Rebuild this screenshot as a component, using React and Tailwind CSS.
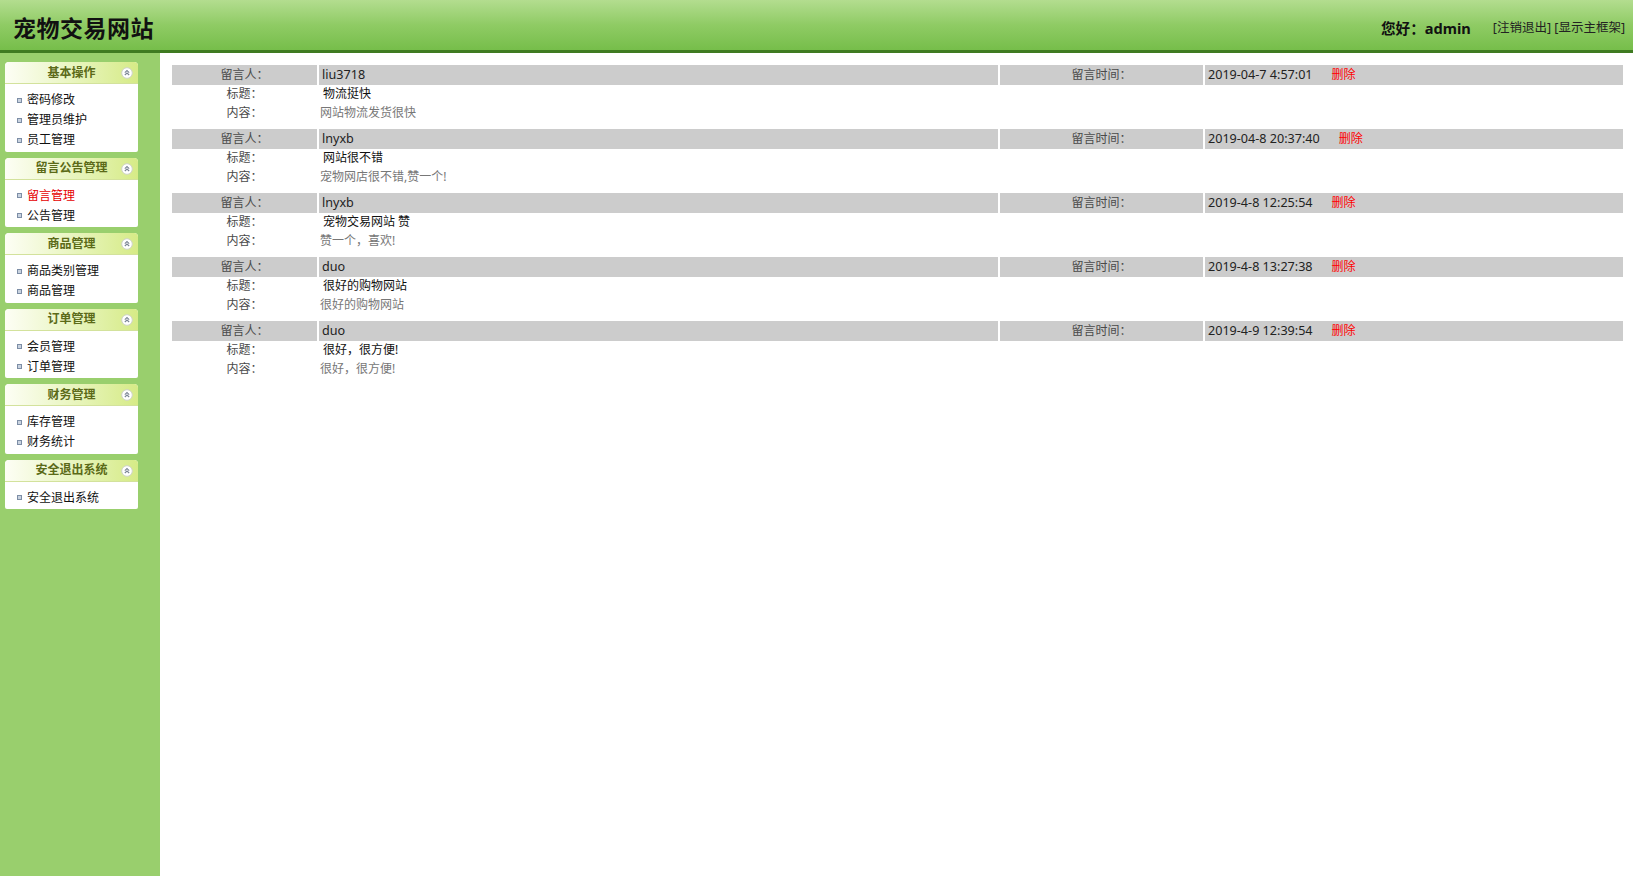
import React from "react";

const FONT = { fontFamily: '"Noto Sans", "Noto Sans CJK SC", sans-serif' };

const menus = [
  { title: "基本操作", items: ["密码修改", "管理员维护", "员工管理"] },
  { title: "留言公告管理", items: ["留言管理", "公告管理"], active: "留言管理" },
  { title: "商品管理", items: ["商品类别管理", "商品管理"] },
  { title: "订单管理", items: ["会员管理", "订单管理"] },
  { title: "财务管理", items: ["库存管理", "财务统计"] },
  { title: "安全退出系统", items: ["安全退出系统"] },
];

const messages = [
  { user: "liu3718", time: "2019-04-7 4:57:01", title: "物流挺快", body: "网站物流发货很快" },
  { user: "lnyxb", time: "2019-04-8 20:37:40", title: "网站很不错", body: "宠物网店很不错,赞一个!" },
  { user: "lnyxb", time: "2019-4-8 12:25:54", title: "宠物交易网站 赞", body: "赞一个，喜欢!" },
  { user: "duo", time: "2019-4-8 13:27:38", title: "很好的购物网站", body: "很好的购物网站" },
  { user: "duo", time: "2019-4-9 12:39:54", title: "很好，很方便!", body: "很好，很方便!" },
];

function CollapseIcon() {
  return (
    <svg width="12" height="12" viewBox="0 0 12 12" className="absolute right-[5px] top-[5px]">
      <circle cx="6" cy="6" r="5.3" fill="#ffffff" stroke="#cfd3c8" strokeWidth="1" />
      <path d="M3.8 5.6 L6 3.6 L8.2 5.6 M3.8 8 L6 6 L8.2 8" fill="none" stroke="#7b8595" strokeWidth="1.1" />
    </svg>
  );
}

function MenuBox({ menu }) {
  return (
    <div className="w-[133px] rounded-t-[4px] rounded-b-[2px] bg-white overflow-hidden">
      <div className="relative h-[22px] flex items-center justify-center bg-gradient-to-r from-[#fdfef5] to-[#d6eb86] border-b border-[#d3e29c]">
        <span className="text-[12px] font-bold text-[#5b6a18]">{menu.title}</span>
        <CollapseIcon />
      </div>
      <ul className="pt-[6px] pb-[1.5px]">
        {menu.items.map((it) => (
          <li key={it} className="h-[20px] flex items-center pl-[12px] gap-[5px] text-[12px]">
            <span className="w-[5px] h-[5px] border border-[#7d8ea6] bg-[#c9d3e0]" />
            <span className={it === menu.active ? "text-[#e60000]" : "text-[#111]"}>{it}</span>
          </li>
        ))}
      </ul>
    </div>
  );
}

function Message({ m }) {
  return (
    <div className="mb-[7px] text-[12px]">
      <div className="grid grid-cols-[145px_1fr_203px_418px] gap-x-[2px] h-[18px]">
        <div className="bg-[#cccccc] flex items-center justify-center pt-[1px] text-[#4a4a4a]">留言人：</div>
        <div className="bg-[#cccccc] flex items-center pl-[3px] pt-[1px] text-[12.6px] text-[#222]">{m.user}</div>
        <div className="bg-[#cccccc] flex items-center justify-center pt-[1px] text-[#4a4a4a]">留言时间：</div>
        <div className="bg-[#cccccc] flex items-center pl-[3px] pt-[1px] text-[#222]">
          <span className="text-[12.6px]">{m.time}</span>
          <span className="ml-[19px] text-[#ff0000]">删除</span>
        </div>
      </div>
      <div className="grid grid-cols-[145px_1fr] gap-x-[2px] mt-[1px]">
        <div className="h-[19px] flex items-center justify-center text-[#4a4a4a]">标题：</div>
        <div className="h-[19px] flex items-center pl-[4px] text-[#111]">{m.title}</div>
        <div className="h-[19px] flex items-center justify-center text-[#4a4a4a]">内容：</div>
        <div className="h-[19px] flex items-center pl-[1px] text-[#777]">{m.body}</div>
      </div>
    </div>
  );
}

export default function App() {
  return (
    <div className="h-[876px] w-full flex flex-col overflow-hidden" style={FONT}>
      <header className="h-[53px] shrink-0 flex items-center justify-between pt-[7px] bg-gradient-to-b from-[#b3dd8f] via-[#8fcb64] to-[#76be4a] border-b-[3px] border-[#3f7b21]">
        <h1 className="pl-[13px] text-[23px] font-bold text-[#111] tracking-[0.5px]">宠物交易网站</h1>
        <div className="flex items-center pr-[8px]">
          <span className="text-[14.6px] font-bold text-[#111]">您好：admin</span>
          <span className="ml-[22px] text-[12.5px] text-[#222]">[注销退出] [显示主框架]</span>
        </div>
      </header>
      <div className="flex flex-1">
        <aside className="w-[160px] shrink-0 bg-[#99cf6d] pt-[9px] pl-[5px] flex flex-col gap-[6px]">
          {menus.map((m) => (
            <MenuBox key={m.title} menu={m} />
          ))}
        </aside>
        <main className="flex-1 bg-white pt-[12px] pl-[12px] pr-[10px]">
          {messages.map((m, i) => (
            <Message key={i} m={m} />
          ))}
        </main>
      </div>
    </div>
  );
}
